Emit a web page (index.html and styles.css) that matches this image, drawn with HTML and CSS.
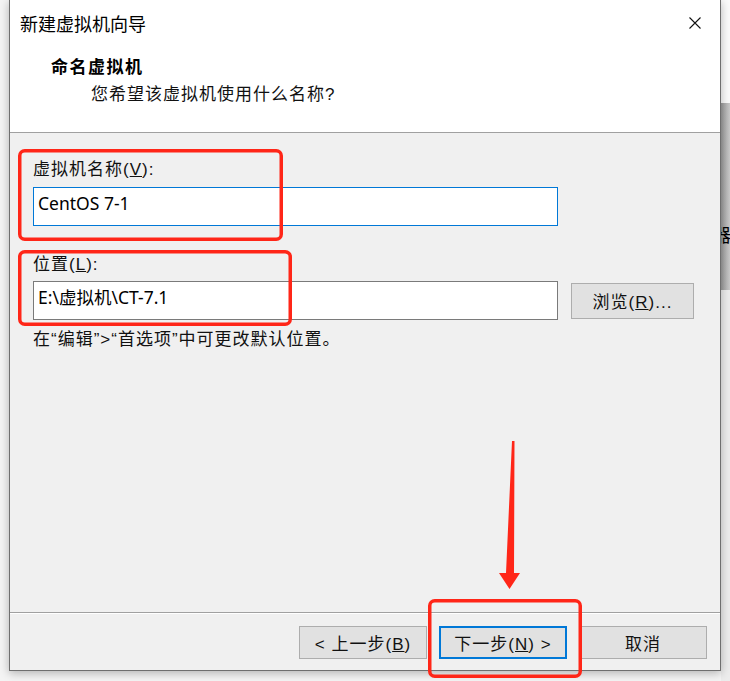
FILE: index.html
```html
<!DOCTYPE html>
<html>
<head>
<meta charset="utf-8" />
<title>新建虚拟机向导</title>
<link rel="stylesheet" href="styles.css">
</head>
<body>
<div class="desk">
  <div class="edge_left"></div>

  <div class="dialog">
    <div class="top">
      <div class="titlebar">
        <span class="title">新建虚拟机向导</span>
        <svg class="close" width="14" height="14" viewBox="0 0 14 14">
          <path d="M1.5 1.5 L12.5 12.5 M12.5 1.5 L1.5 12.5" stroke="#111" stroke-width="1.1" fill="none" />
        </svg>
      </div>
      <div class="header">
        <div class="h_title">命名虚拟机</div>
        <div class="h_sub">您希望该虚拟机使用什么名称?</div>
      </div>
    </div>

    <div class="body">
      <div class="field_label">虚拟机名称(<u>V</u>):</div>
      <div class="row">
        <div class="input focused">CentOS 7-1</div>
      </div>
      <div class="field_label second">位置(<u>L</u>):</div>
      <div class="row loc">
        <div class="input">E:\虚拟机\CT-7.1</div>
        <button class="btn browse">浏览(<u>R</u>)...</button>
      </div>
      <div class="hint">在“编辑”&gt;“首选项”中可更改默认位置。</div>
    </div>

    <div class="footer">
      <button class="btn nav">&lt; 上一步(<u>B</u>)</button>
      <button class="btn nav default">下一步(<u>N</u>) &gt;</button>
      <button class="btn nav">取消</button>
    </div>
  </div>

  <div class="edge_right">
    <div class="er_top"></div>
    <div class="er_band"><span class="er_glyph">器</span></div>
    <div class="er_rest"></div>
  </div>

  <!-- annotations drawn over the screenshot -->
  <svg class="marks" width="730" height="681" viewBox="0 0 730 681">
    <rect x="19.75" y="150.75" width="261.5" height="88.5" rx="5" />
    <rect x="19.75" y="251.75" width="270.5" height="72.5" rx="5" />
    <rect x="429.75" y="600.75" width="150.5" height="75.5" rx="5" />
    <polygon class="arrow" points="512,441 514.5,441 514,573 520,573 509.5,589 499,573 506,573" />
  </svg>
</div>
</body>
</html>
```

FILE: styles.css
```css
* {
  box-sizing: border-box;
}
body {
  margin: 0;
  background: #f5f5f5;
  font-family: 'Liberation Sans', 'Noto Sans CJK SC', sans-serif;
  color: #111;
}
.desk {
  width: 730px;
  height: 681px;
  overflow: hidden;
  position: relative;
  display: flex;
  align-items: flex-start;
  background: #f4f4f4;
}
.edge_left {
  width: 9px;
  flex: none;
}
.dialog {
  position: relative;
  z-index: 1;
  width: 712px;
  height: 671px;
  flex: none;
  display: flex;
  flex-direction: column;
  border: 1px solid #6f6f6f;
  border-top: none;
  background: #f0f0f0;
  box-shadow: 0 2px 9px rgba(0, 0, 0, .28);
}
.top {
  height: 133px;
  background: #fff;
  border-bottom: 1px solid #a0a0a0;
}
.titlebar {
  height: 46px;
  display: flex;
  align-items: center;
  justify-content: space-between;
  padding: 0 18px 0 10px;
}
.title {
  font-family: 'Noto Sans CJK SC', sans-serif;
  font-size: 18px;
  color: #000;
}
.header {
  padding-left: 41px;
}
.h_title {
  margin-top: 11px;
  line-height: 22px;
  font-size: 17px;
  font-weight: bold;
  letter-spacing: 1.5px;
  color: #000;
}
.h_sub {
  margin-top: 5px;
  margin-left: 40px;
  line-height: 22px;
  font-size: 17px;
  letter-spacing: 1px;
}
.body {
  flex: 1;
  padding: 27px 0 0 23px;
}
.field_label {
  line-height: 20px;
  font-size: 17px;
  letter-spacing: 1px;
}
.field_label.second {
  margin-top: 29px;
}
.row {
  display: flex;
  align-items: center;
  margin-top: 7px;
}
.row.loc {
  margin-top: 6px;
}
.input {
  width: 525px;
  height: 39px;
  padding: 4px 0 0 4px;
  line-height: 22px;
  background: #fff;
  border: 1px solid #7a7a7a;
  font-family: 'Noto Sans', 'Noto Sans CJK SC', sans-serif;
  font-size: 17.5px;
  color: #000;
}
.input.focused {
  border-color: #0078d7;
}
.btn {
  height: 33px;
  padding: 0;
  background: #e1e1e1;
  border: 1px solid #adadad;
  font-family: 'Liberation Sans', 'Noto Sans CJK SC', sans-serif;
  font-size: 17px;
  letter-spacing: 1px;
  color: #111;
}
.browse {
  width: 123px;
  height: 36px;
  margin-left: 13px;
}
.hint {
  margin-top: 10px;
  line-height: 20px;
  font-size: 17px;
  letter-spacing: 1px;
}
.footer {
  height: 58px;
  border-top: 1px solid #a0a0a0;
  box-shadow: inset 0 1px #fff;
  padding: 13px 13px 0 0;
  display: flex;
  justify-content: flex-end;
  gap: 12px;
}
.nav {
  width: 128px;
}
.nav.default {
  border: 2px solid #0078d7;
}
.edge_right {
  width: 9px;
  height: 681px;
  flex: none;
  display: flex;
  flex-direction: column;
}
.er_top {
  height: 103px;
  background: #fbfbfb;
}
.er_band {
  height: 187px;
  overflow: hidden;
  background: linear-gradient(to right, #9c9c9c, #c9c9c9);
  padding-top: 121px;
}
.er_glyph {
  display: block;
  margin-left: -8px;
  font-family: 'Noto Sans CJK SC', sans-serif;
  font-size: 18px;
  line-height: 20px;
  color: #000;
}
.er_rest {
  flex: 1;
  background: #ececec;
}
.marks {
  position: absolute;
  left: 0;
  top: 0;
  z-index: 2;
  pointer-events: none;
}
.marks rect {
  fill: none;
  stroke: #ff2618;
  stroke-width: 3.5;
}
.marks .arrow {
  fill: #ff2618;
}
```
